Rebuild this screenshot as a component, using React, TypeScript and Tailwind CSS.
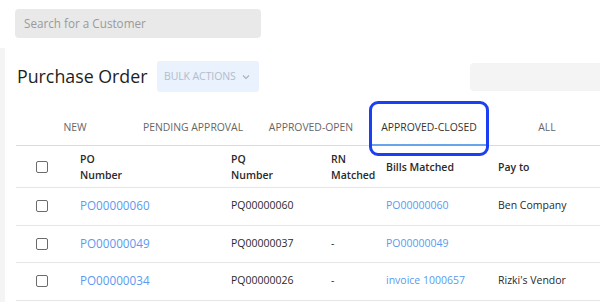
import React from "react";

const rows = [
  { po: "PO00000060", pq: "PQ00000060", rn: "", bill: "PO00000060", pay: "Ben Company" },
  { po: "PO00000049", pq: "PQ00000037", rn: "-", bill: "PO00000049", pay: "" },
  { po: "PO00000034", pq: "PQ00000026", rn: "-", bill: "invoice 1000657", pay: "Rizki's Vendor" },
];

const tabs = ["NEW", "PENDING APPROVAL", "APPROVED-OPEN", "APPROVED-CLOSED", "ALL"];

function Box() {
  return <div className="w-[12px] h-[12px] border-[1.5px] border-[#6b6b6b] rounded-[2px] ml-[20px]" />;
}

export default function App() {
  return (
    <div
      className="w-[600px] h-[302px] overflow-hidden bg-white relative"
      style={{ fontFamily: "'Open Sans', 'Noto Sans', sans-serif" }}
    >
      <div className="pt-[9px] pl-[15px]">
        <div className="w-[246px] h-[29px] rounded-[4px] bg-[#e9e9e9] flex items-center pl-[9px] text-[11.7px] text-[#9a9a9a]">
          Search for a Customer
        </div>
      </div>
      <div className="flex mt-[10px]">
        <div className="w-[5px] shrink-0 h-[260px] bg-[#f4f4f4]" />
        <div className="flex-1 min-w-0">
          <div className="flex items-center mt-[13px] h-[31px]">
            <div className="ml-[12px] w-[128px] shrink-0 whitespace-nowrap text-[17.8px] text-[#1e1e1e] leading-none">Purchase Order</div>
            <div className="ml-[12px] shrink-0 w-[102px] h-[31px] rounded-[3px] bg-[#e9f2fd] flex items-center pl-[7px] text-[10.5px] text-[#b3bccb] tracking-[-0.1px]">
              BULK ACTIONS
              <svg className="ml-[6px]" width="8" height="6" viewBox="0 0 8 6">
                <path d="M1 1.5 L4 4.5 L7 1.5" fill="none" stroke="#a9b3c2" strokeWidth="1.2" />
              </svg>
            </div>
            <div className="ml-[211px] shrink-0 w-[140px] h-[28px] rounded-[4px] bg-[#f4f4f4]" />
          </div>
          <div className="ml-[11px] mt-[18px] flex border-b border-[#dcdcdc] h-[36px]">
            {tabs.map((t, i) => (
              <div
                key={t}
                className={
                  "w-[118px] shrink-0 flex items-center justify-center text-[10.4px] relative " +
                  (i === 3 ? "text-[#333]" : "text-[#666]")
                }
              >
                {t}
                {i === 3 && <div className="absolute left-[2px] right-[2px] bottom-[-1px] h-[2px] bg-[#6aa4ec]" />}
              </div>
            ))}
          </div>
          <div className="ml-[11px] text-[10.5px]">
            <div className="flex items-center h-[42px] border-b border-[#e6e6e6] font-semibold text-[#2a2a2a] leading-[16px]">
              <div className="w-[64px] shrink-0"><Box /></div>
              <div className="w-[151px] shrink-0">PO<br />Number</div>
              <div className="w-[100px] shrink-0">PQ<br />Number</div>
              <div className="w-[55px] shrink-0">RN<br />Matched</div>
              <div className="w-[112px] shrink-0">Bills Matched</div>
              <div className="shrink-0">Pay to</div>
            </div>
            {rows.map((r) => (
              <div key={r.po} className="flex items-center h-[37.5px] border-b border-[#e6e6e6] text-[#2a2a2a]">
                <div className="w-[64px] shrink-0"><Box /></div>
                <div className="w-[151px] shrink-0 text-[11.7px] text-[#5b9af0]">{r.po}</div>
                <div className="w-[100px] shrink-0">{r.pq}</div>
                <div className="w-[55px] shrink-0">{r.rn}</div>
                <div className="w-[112px] shrink-0 text-[#5b9af0]">{r.bill}</div>
                <div className="shrink-0 whitespace-nowrap">{r.pay}</div>
              </div>
            ))}
          </div>
        </div>
      </div>
      <div className="absolute left-[369px] top-[101px] w-[120px] h-[55px] border-[3px] border-[#1b3ff2] rounded-[9px]" />
    </div>
  );
}
